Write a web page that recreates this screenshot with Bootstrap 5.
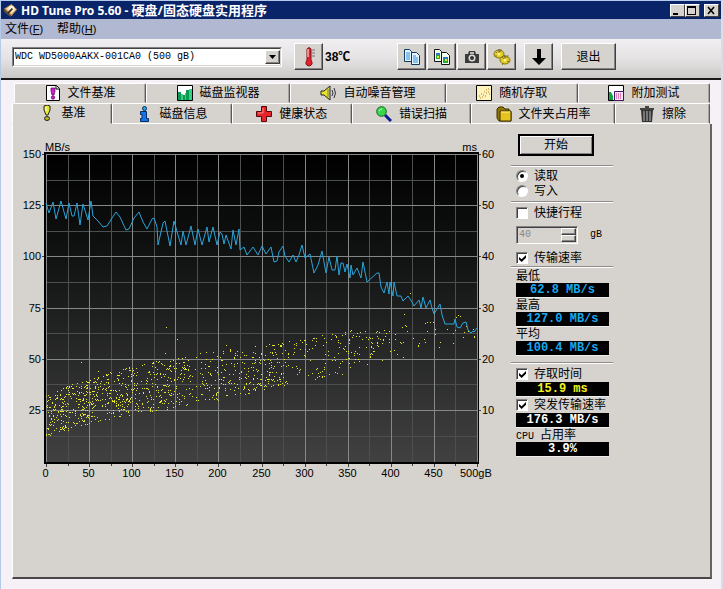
<!DOCTYPE html>
<html lang="zh-CN">
<head>
<meta charset="utf-8">
<meta name="viewport" content="width=device-width, initial-scale=1">
<title>HD Tune Pro 5.60</title>
<link href="https://cdn.jsdelivr.net/npm/bootstrap@5.3.0/dist/css/bootstrap.min.css" rel="stylesheet">
<style>
:root { --face: #d6d3ce; --dark: #848284; --navy: #0a246a; }
body { background: #f5f1f7; color: #000; font: 12px/14px "Liberation Sans", "Noto Sans CJK SC", sans-serif; }
.win { border: 1px solid #b5cae8; border-right: 2px solid #dcdce6; border-bottom: 0; min-height: 100vh; }
.titlebar { background: var(--navy); color: #fff; height: 18px; padding: 0 2px; font: bold 12px/18px "Noto Sans", "Noto Sans CJK SC", sans-serif; }
.titlebar h1 { font: inherit; gap: 3px; }
.titlebar .zh { font-size: 13px; }
.capbtn { width: 15px; height: 13px; padding: 0; border: 1px solid; border-color: #fff #404040 #404040 #fff; background: var(--face); }
.capbtn svg { width: 11px; height: 11px; }
.menubar { background: #b1b8d1; height: 20px; padding: 0 4px; gap: 14px; line-height: 20px; }
.menubar a { color: #000; text-decoration: none; }
.menubar span { font-size: 11px; }
.toolbar { height: 41px; padding: 4px 12px 8px 11px; background: linear-gradient(#f1eff1, #e4e2e3 50%, #cbc9c7); border-bottom: 2px solid #1a1a1a; }
.drive { flex: 0 0 270px; height: 20px; border: 1px solid; border-color: var(--dark) #fff #fff var(--dark); background: #fff; }
.drive select { border: 1px solid; border-color: #404040 var(--face) var(--face) #404040; border-radius: 0; background: #fff; appearance: none; color: #000; padding: 0 18px 0 1px; font: 10px/16px "Liberation Mono", monospace; }
.drive .arrow { top: 2px; right: 1px; width: 15px; height: 14px; pointer-events: none; }
.raised { border: 1px solid; border-color: #fff #404040 #404040 #fff; box-shadow: inset -1px -1px 0 var(--dark); background: var(--face); border-radius: 0; color: #000; padding: 0; }
.toolset { gap: 1px; }
.tool { width: 29px; height: 27px; }
.exit { width: 55px; height: 27px; font-size: 12px; }
.temp { width: 74px; font-weight: bold; padding-left: 2px; }
.book { margin: 3px 9px 10px 11px; }
.tabrow { line-height: 18px; }
.tabrow button { border: 1px solid; border-color: #fff #5c5a58 transparent #fff; border-top-left-radius: 2px; border-top-right-radius: 2px; background: var(--face); color: #000; padding: 0; gap: 7px; min-width: 0; height: 20px; white-space: nowrap; flex: 120 1 0; box-shadow: inset -1px 0 0 #a8a5a2; }
.tabrow.upper { padding: 0 2px; }
.tabrow.lower { padding-right: 2px; }
.tabrow.lower button { height: 21px; border-bottom-color: #fff; }
.tabrow.lower button.active { border-bottom-color: var(--face); padding-bottom: 2px; }
.tabrow .w95 { flex-grow: 95; } .tabrow .w100 { flex-grow: 100; } .tabrow .w132 { flex-grow: 132; } .tabrow .w144 { flex-grow: 144; } .tabrow .w156 { flex-grow: 156; }
.ic { width: 16px; height: 16px; flex: none; }
.sheet { background: var(--face); border-left: 1px solid #fff; border-right: 2px solid #66635f; border-bottom: 2px solid #4a4648; }
.chart { flex: 1 1 0; min-width: 0; height: auto; }
.chart text { font: 11px "Liberation Sans", sans-serif; }
.side { flex: 0 0 102px; margin: 10px 97px 0 11px; }
.start { width: 76px; height: 22px; margin: 0 0 9px 7px; border: 2px solid #000; box-shadow: inset 1px 1px 0 #fff, inset -1px -1px 0 var(--dark); background: var(--face); color: #000; font-size: 12px; border-radius: 0; padding: 0; }
.rule { border: 0; border-top: 1px solid #8e8c8a; border-bottom: 1px solid #fff; opacity: 1; height: 2px; margin: 0 0 1px; }
.rule.mid { margin: 3px 0 2px; }
.rule.late { margin: 6px 0 2px; }
.opt { padding-left: 5px; gap: 6px; height: 16px; white-space: nowrap; }
.opt.tight { height: 15px; }
.opt input { appearance: none; width: 12px; height: 12px; margin: 0; flex: none; background: #fff; border: 1px solid; border-color: var(--dark) #fff #fff var(--dark); box-shadow: inset 1px 1px 0 #404040; position: relative; }
.opt input[type=radio] { border-radius: 50%; }
.opt input[type=radio]:checked::before { content: ""; position: absolute; inset: 3px; border-radius: 50%; background: #000; }
.opt input[type=checkbox]:checked::before { content: ""; position: absolute; inset: 2px 1px 1px 2px; background: #000; clip-path: polygon(0 30%, 38% 62%, 100% 0, 100% 38%, 38% 100%, 0 66%); }
.stroke { padding: 5px 0 6px 5px; }
.spin { width: 62px; height: 18px; border: 1px solid; border-color: var(--dark) #fff #fff var(--dark); box-shadow: inset 1px 1px 0 #404040; padding: 1px; }
.spin input { width: 43px; border: 0; background: transparent; color: #8a8886; padding: 0 1px; font: 10px/14px "Liberation Mono", monospace; appearance: textfield; }
.spin input::-webkit-inner-spin-button { display: none; }
.spin .raised { height: 7px; width: 15px; }
.mono { font: 10px/14px "Liberation Mono", "Noto Sans CJK SC", monospace; }
.cap { height: 14px; padding-left: 5px; display: block; white-space: nowrap; }
.val { display: block; margin: 0 4px 0 5px; height: 15px; background: #000; color: #18a8f0; text-align: center; white-space: nowrap; font: bold 12px/14px "Liberation Mono", monospace; border-bottom: 1px solid #eee; }
.val.time { color: #f4f41c; } .val.plain { color: #fff; }
</style>
<script src="https://cdn.jsdelivr.net/npm/bootstrap@5.3.0/dist/js/bootstrap.bundle.min.js"></script>
</head>
<body>
<div class="win d-flex flex-column">
  <header class="titlebar d-flex align-items-center">
    <h1 class="d-flex align-items-center m-0 me-auto text-nowrap">
      <svg width="15" height="15" viewBox="0 0 16 16" aria-hidden="true"><path d="M1 6 9 1l6 6-6 7z" fill="#b88a50"/><path d="M3 6 9 2l5 5-5 5z" fill="#f1d9a4"/><circle cx="9" cy="6" r="3" fill="#fff5d8"/><path d="m1 7 7 6v2L1 9z" fill="#765028"/><path d="m5 11 5-5" stroke="#3b2b20" stroke-width="2"/></svg>
      <span>HD Tune Pro 5.60 - <span class="zh">硬盘/固态硬盘实用程序</span></span>
    </h1>
    <button class="capbtn d-flex" aria-label="最小化"><svg viewBox="0 0 11 11"><path d="M2 8h5v2H2z"/></svg></button>
    <button class="capbtn d-flex" aria-label="最大化"><svg viewBox="0 0 11 11"><path d="M1 1h9v9H1zM2 3v6h7V3z" fill-rule="evenodd"/></svg></button>
    <button class="capbtn d-flex ms-1" aria-label="关闭"><svg viewBox="0 0 11 11"><path d="m3 2 6 7M9 2 3 9" stroke="#000" stroke-width="1.6"/></svg></button>
  </header>
  <nav class="menubar d-flex">
    <a href="#">文件<span>(<u>F</u>)</span></a>
    <a href="#">帮助<span>(<u>H</u>)</span></a>
  </nav>
  <div class="toolbar d-flex align-items-center">
    <div class="drive position-relative me-2">
      <select class="w-100 h-100 d-block" aria-label="驱动器"><option>WDC WD5000AAKX-001CA0 (500 gB)</option></select>
      <span class="arrow raised position-absolute d-flex"><svg viewBox="0 0 13 12"><path d="M3 4h7L6.500 8z"/></svg></span>
    </div>
    <button class="raised tool ms-1" aria-label="温度"><svg width="20" height="22" viewBox="0 0 20 22"><path d="M8 3q2-3 4 0v11q3 5-2 6-5-1-2-6z" fill="#e8202c" stroke="#7c1010"/><path d="M9 3v8" stroke="#fff"/><path d="M13 4h3M13 7h3M13 10h3" stroke="#777"/></svg></button>
    <span class="temp">38℃</span>
    <div class="toolset d-flex">
      <button class="raised tool" aria-label="复制文本"><svg width="18" height="18" viewBox="0 0 18 18"><g fill="#e6f6ff" stroke="#10395e"><path d="M1.500 1.500h5l2 2v10h-7z"/><path d="M8.500 4.500h5l3 3v9h-8z"/></g><path d="M3 5h4M3 7h4M3 9h4M3 11h4M10 8h3M10 10h5M10 12h5M10 14h5" stroke="#2a8ee0"/></svg></button>
      <button class="raised tool" aria-label="复制图像"><svg width="18" height="18" viewBox="0 0 18 18"><g fill="#f0fff0" stroke="#111"><path d="M1.500 1.500h5l2 2v10h-7z"/><path d="M8.500 4.500h5l3 3v9h-8z"/></g><path d="M3 5h4v6H3zM10 9h5v6h-5z" fill="#2aa632"/><path d="M3 5h4v2H3zM10 9h5v2h-5z" fill="#3277c8"/><path d="M4 8h2v2H4zM12 11h2v2h-2z" fill="#e4e040"/></svg></button>
      <button class="raised tool" aria-label="保存截图"><svg width="18" height="18" viewBox="0 0 18 18"><path d="M2 6h3l1-3h6l1 3h3v9H2z" fill="#3c3c3c"/><path d="M7 4h4v2H7z" fill="#bbb"/><circle cx="9" cy="10" r="3.500" fill="#ddd"/><circle cx="9" cy="10" r="2" fill="#333"/></svg></button>
      <button class="raised tool" aria-label="选项"><svg width="18" height="18" viewBox="0 0 18 18"><g stroke="#6e5c00" stroke-width=".8"><ellipse cx="6" cy="6" rx="5" ry="4" fill="#e6cc20"/><ellipse cx="12" cy="12" rx="5" ry="4" fill="#e6cc20"/></g><path d="m2 3 2 2m4-4-1 3m-6 4h3m5 1 2 2m4-4-1 3m-5 7 2-2m6-1-3-1" stroke="#8a7810"/><path d="M6 1v5M12 7v5" stroke="#555"/><circle cx="6" cy="6" r="1.500" fill="#fff490"/><circle cx="12" cy="12" r="1.500" fill="#fff490"/></svg></button>
    </div>
    <button class="raised tool ms-2" aria-label="向下"><svg width="18" height="18" viewBox="0 0 18 18"><path d="M7 1h4v9h5l-7 7-7-7h5z"/></svg></button>
    <button class="raised exit ms-2">退出</button>
  </div>

  <main class="book flex-fill d-flex flex-column">
    <div class="tabrow upper d-flex" role="tablist">
      <button class="w132 d-flex align-items-center justify-content-center" role="tab"><svg class="ic" viewBox="0 0 16 16"><path d="M1.500.5h10l3 3v12h-13z" fill="#fff" stroke="#000"/><path d="M11 1v3h3" fill="none" stroke="#000"/><path d="M6 3h4v3L9 10H7L6 6z" fill="#d020d0" stroke="#500050" stroke-width=".7"/><circle cx="8" cy="12.500" r="1.700" fill="#d020d0" stroke="#500050" stroke-width=".7"/></svg>文件基准</button>
      <button class="w144 d-flex align-items-center justify-content-center" role="tab"><svg class="ic" viewBox="0 0 16 16"><path d="M.5.5h15v15H.5z" fill="#fff" stroke="#000"/><path d="M1 7h3v8H1zM6 10h2v5H6zM9 5h3v10H9z" fill="#0c9a50"/><path d="M4 9h2v6H4zM8 8h1v7H8zM12 4h3v11h-3z" fill="#35d084"/></svg>磁盘监视器</button>
      <button class="w156 d-flex align-items-center justify-content-center" role="tab"><svg class="ic" viewBox="0 0 16 16"><path d="M1 6h3l6-5v14l-6-5H1z" fill="#e7e32c" stroke="#222"/><path d="M8 4v8" stroke="#777"/><path d="M12 5q2 3 0 6M14 3q3 5 0 10" fill="none" stroke="#334"/></svg>自动噪音管理</button>
      <button class="w132 d-flex align-items-center justify-content-center" role="tab"><svg class="ic" viewBox="0 0 16 16"><path d="M.5.5h15v15H.5z" fill="#fff3bc" stroke="#000"/><path d="M3 11h1M5 9h1M4 13h1M7 10h1M8 7h1M10 8h1M12 4h1M10 5h1M6 12h1M12 7h1M9 11h1M13 9h1" stroke="#b08020"/></svg>随机存取</button>
      <button class="w132 d-flex align-items-center justify-content-center" role="tab"><svg class="ic" viewBox="0 0 16 16"><path d="M.5.5h15v15H.5z" fill="#fff" stroke="#000"/><path d="M1 7h2l2 4v4H1z" fill="#12a04c"/><path d="M6.500 6.500h9v9h-9z" fill="#ffe1f4" stroke="#401860"/><path d="M8 9h6M8 11h6M8 13h6" stroke="#c12088" stroke-dasharray="1 1"/></svg>附加测试</button>
    </div>
    <div class="tabrow lower d-flex" role="tablist">
      <button class="active w100 d-flex align-items-center justify-content-center" role="tab" aria-selected="true"><svg class="ic" viewBox="0 0 16 16"><path d="M5 1q3-2 6 0v4l-2 5H7L5 5z" fill="#e9e92c" stroke="#222"/><ellipse cx="8" cy="13.500" rx="2.500" ry="2" fill="#b8b820" stroke="#222"/><path d="M7 2v4" stroke="#fff"/></svg>基准</button>
      <button class="d-flex align-items-center justify-content-center" role="tab"><svg class="ic" viewBox="0 0 16 16"><circle cx="7.500" cy="2.500" r="2" fill="#28a8f0" stroke="#062c60"/><path d="M3.500 5.500h6v7h2v3h-8v-3H5v-4H3.500z" fill="#1474ee" stroke="#062c60"/></svg>磁盘信息</button>
      <button class="d-flex align-items-center justify-content-center" role="tab"><svg class="ic" viewBox="0 0 16 16"><path d="M5.500.5h5v5h5v5h-5v5h-5v-5h-5v-5h5z" fill="#e5242c" stroke="#590808"/><path d="M7 2v5H2" fill="none" stroke="#ff8c88"/></svg>健康状态</button>
      <button class="d-flex align-items-center justify-content-center" role="tab"><svg class="ic" viewBox="0 0 16 16"><path d="m9 9 6 6" stroke="#0b1c98" stroke-width="3"/><circle cx="5.500" cy="5.500" r="4.800" fill="#38d94c" stroke="#166020"/><path d="M3 5q1-2 3-2" stroke="#d4ffd4" fill="none"/></svg>错误扫描</button>
      <button class="w144 d-flex align-items-center justify-content-center" role="tab"><svg class="ic" viewBox="0 0 16 16"><path d="M1 3l2-2h4l2 2h4v3h2v9H3L1 12z" fill="#927500" stroke="#3c3000"/><path d="M4 5h11v10H4z" fill="#e6c420" stroke="#3c3000"/><path d="M5 6h9" stroke="#fff38c"/></svg>文件夹占用率</button>
      <button class="w95 d-flex align-items-center justify-content-center" role="tab"><svg class="ic" viewBox="0 0 16 16"><path d="M2 4h12l-1 12H3z" fill="#333"/><path d="M1 2h5V0h4v2h5v2H1z" fill="#444"/><path d="M5 5v10M8 5v10M11 5v10" stroke="#bbb"/></svg>擦除</button>
    </div>

    <section class="sheet flex-fill d-flex align-items-start">
      <svg class="chart" viewBox="13 124 487 364" role="img" aria-label="传输速率与存取时间图">
        <defs><linearGradient id="bg" x1="0" y1="0" x2="0" y2="1"><stop offset="0" stop-color="#000"/><stop offset=".35" stop-color="#121413"/><stop offset="1" stop-color="#404140"/></linearGradient></defs>
        <path d="M44 152h435v312H44z"/>
        <path d="M46 154h432v308H46z" fill="url(#bg)"/>
        <path id="minor" stroke="#4c4f4e" shape-rendering="crispEdges"/>
        <path id="major" stroke="#858886" shape-rendering="crispEdges"/>
        <path id="ticks" stroke="#444" shape-rendering="crispEdges"/>
        <path id="dots" fill="#e6e62a" shape-rendering="crispEdges"/>
        <polyline fill="none" stroke="#2aa4da" stroke-width="1" points="46,203 49,213 53,202 56,219 61,201 66,219 69,203 72,216 74,216 77,203 80,225 83,204 88,220 91,201 93,216 98,221 103,227 107,226 112,218 116,212 120,217 126,230 129,229 134,218 139,212 143,222 147,229 152,219 154,218 157,227 158,245 163,223 165,221 170,246 174,221 178,235 181,245 183,231 186,245 191,226 195,245 198,229 202,245 207,227 209,242 213,227 217,245 220,232 222,234 224,244 226,235 231,249 233,230 236,245 239,229 240,250 244,247 247,255 253,247 258,255 262,246 266,254 271,247 274,262 277,261 279,252 283,246 285,256 289,262 293,255 296,262 299,255 302,245 305,258 310,254 314,273 318,265 322,251 326,273 329,257 332,270 335,270 337,256 339,275 341,263 343,263 345,272 347,264 350,278 351,265 353,275 357,268 361,278 363,262 367,282 377,273 379,273 381,287 384,293 387,282 389,294 390,282 393,296 394,282 397,296 401,296 403,301 408,296 412,302 414,306 419,300 421,308 423,297 426,308 430,300 432,308 434,314 440,304 442,315 445,324 454,324 455,319 457,327 460,328 463,323 466,322 468,330 471,333 473,331 474,332 477,328"/>
        <text x="45" y="151">MB/s</text>
        <text x="477" y="151" text-anchor="end">ms</text>
        <g id="labels"></g>
        <text x="460" y="477">500gB</text>
      </svg>

      <form class="side">
        <button type="button" class="start d-block">开始</button>
        <hr class="rule">
        <label class="opt tight d-flex align-items-center"><input type="radio" name="mode" checked>读取</label>
        <label class="opt tight d-flex align-items-center"><input type="radio" name="mode">写入</label>
        <hr class="rule mid">
        <label class="opt d-flex align-items-center"><input type="checkbox">快捷行程</label>
        <div class="stroke d-flex align-items-center">
          <div class="spin d-flex"><input type="number" value="40" disabled aria-label="快捷行程大小">
            <div class="d-flex flex-column"><button type="button" class="raised" disabled aria-label="增加"></button><button type="button" class="raised" disabled aria-label="减少"></button></div></div>
          <span class="mono ms-2 ps-1">gB</span>
        </div>
        <label class="opt d-flex align-items-center"><input type="checkbox" checked>传输速率</label>
        <hr class="rule">
        <span class="cap">最低</span><output class="val">62.8 MB/s</output>
        <span class="cap">最高</span><output class="val">127.0 MB/s</output>
        <span class="cap">平均</span><output class="val">100.4 MB/s</output>
        <hr class="rule late">
        <label class="opt d-flex align-items-center"><input type="checkbox" checked>存取时间</label>
        <output class="val time">15.9 ms</output>
        <label class="opt d-flex align-items-center"><input type="checkbox" checked>突发传输速率</label>
        <output class="val plain">176.3 MB/s</output>
        <span class="cap"><span class="mono">CPU </span>占用率</span>
        <output class="val plain">3.9%</output>
      </form>
    </section>
  </main>
</div>
<script>
// Grid lines, ticks and axis labels
let minor = "", major = "", ticks = "", labels = "";
for (let i = 0; i <= 20; i++) {
  const x = Math.round(46 + i * 21.55) + 0.5, line = `M${x} 154V462`;
  if (i % 2) minor += line; else major += line;
  ticks += `M${x} 464v${i % 2 ? 2 : 3}`;
  if (i % 2 === 0 && i < 20) labels += `<text x="${x - 1}" y="477" text-anchor="middle">${i * 25}</text>`;
}
for (let i = 0; i < 12; i++) {
  const y = Math.round(154 + i * 25.6) + 0.5, line = `M46 ${y}H478`;
  if (i % 2) minor += line; else major += line;
  if (i % 2 === 0) {
    ticks += `M42 ${y}h2M479 ${y}h2`;
    labels += `<text x="41" y="${y + 3.5}" text-anchor="end">${150 - i * 12.5}</text><text x="482" y="${y + 3.5}">${60 - i * 5}</text>`;
  }
}
document.getElementById("minor").setAttribute("d", minor);
document.getElementById("major").setAttribute("d", major);
document.getElementById("ticks").setAttribute("d", ticks);
document.getElementById("labels").innerHTML = labels;

// Access-time samples: [x from, x to, top, bottom, next top, next bottom, count]
const bands = [
  [46, 68, 396, 438, 384, 430, 130], [68, 90, 384, 430, 379, 424, 125], [90, 132, 378, 424, 366, 414, 210],
  [132, 175, 364, 414, 358, 408, 170], [175, 218, 358, 408, 350, 400, 120], [218, 261, 350, 398, 345, 392, 125],
  [261, 287, 345, 392, 341, 386, 90], [287, 347, 338, 384, 330, 374, 90], [347, 390, 330, 368, 324, 362, 70],
  [390, 433, 320, 360, 314, 352, 24], [433, 477, 312, 350, 316, 336, 18]];
let seed = 7, dots = "";
const rnd = () => (seed = (seed * 16807) % 2147483647) / 2147483647;
for (const [x0, x1, t0, b0, t1, b1, n] of bands)
  for (let i = 0; i < n; i++) {
    const f = rnd(), t = t0 + (t1 - t0) * f, b = b0 + (b1 - b0) * f;
    dots += `M${Math.round(x0 + (x1 - x0) * f)} ${Math.round(t + (b - t) * rnd())}h1v1h-1z`;
  }
for (const [x, y] of [[166, 327], [177, 339], [81, 362], [165, 353], [410, 293], [226, 345], [98, 371], [404, 314], [458, 315]])
  dots += `M${x} ${y}h1v1h-1z`;
document.getElementById("dots").setAttribute("d", dots);
</script>
</body>
</html>
